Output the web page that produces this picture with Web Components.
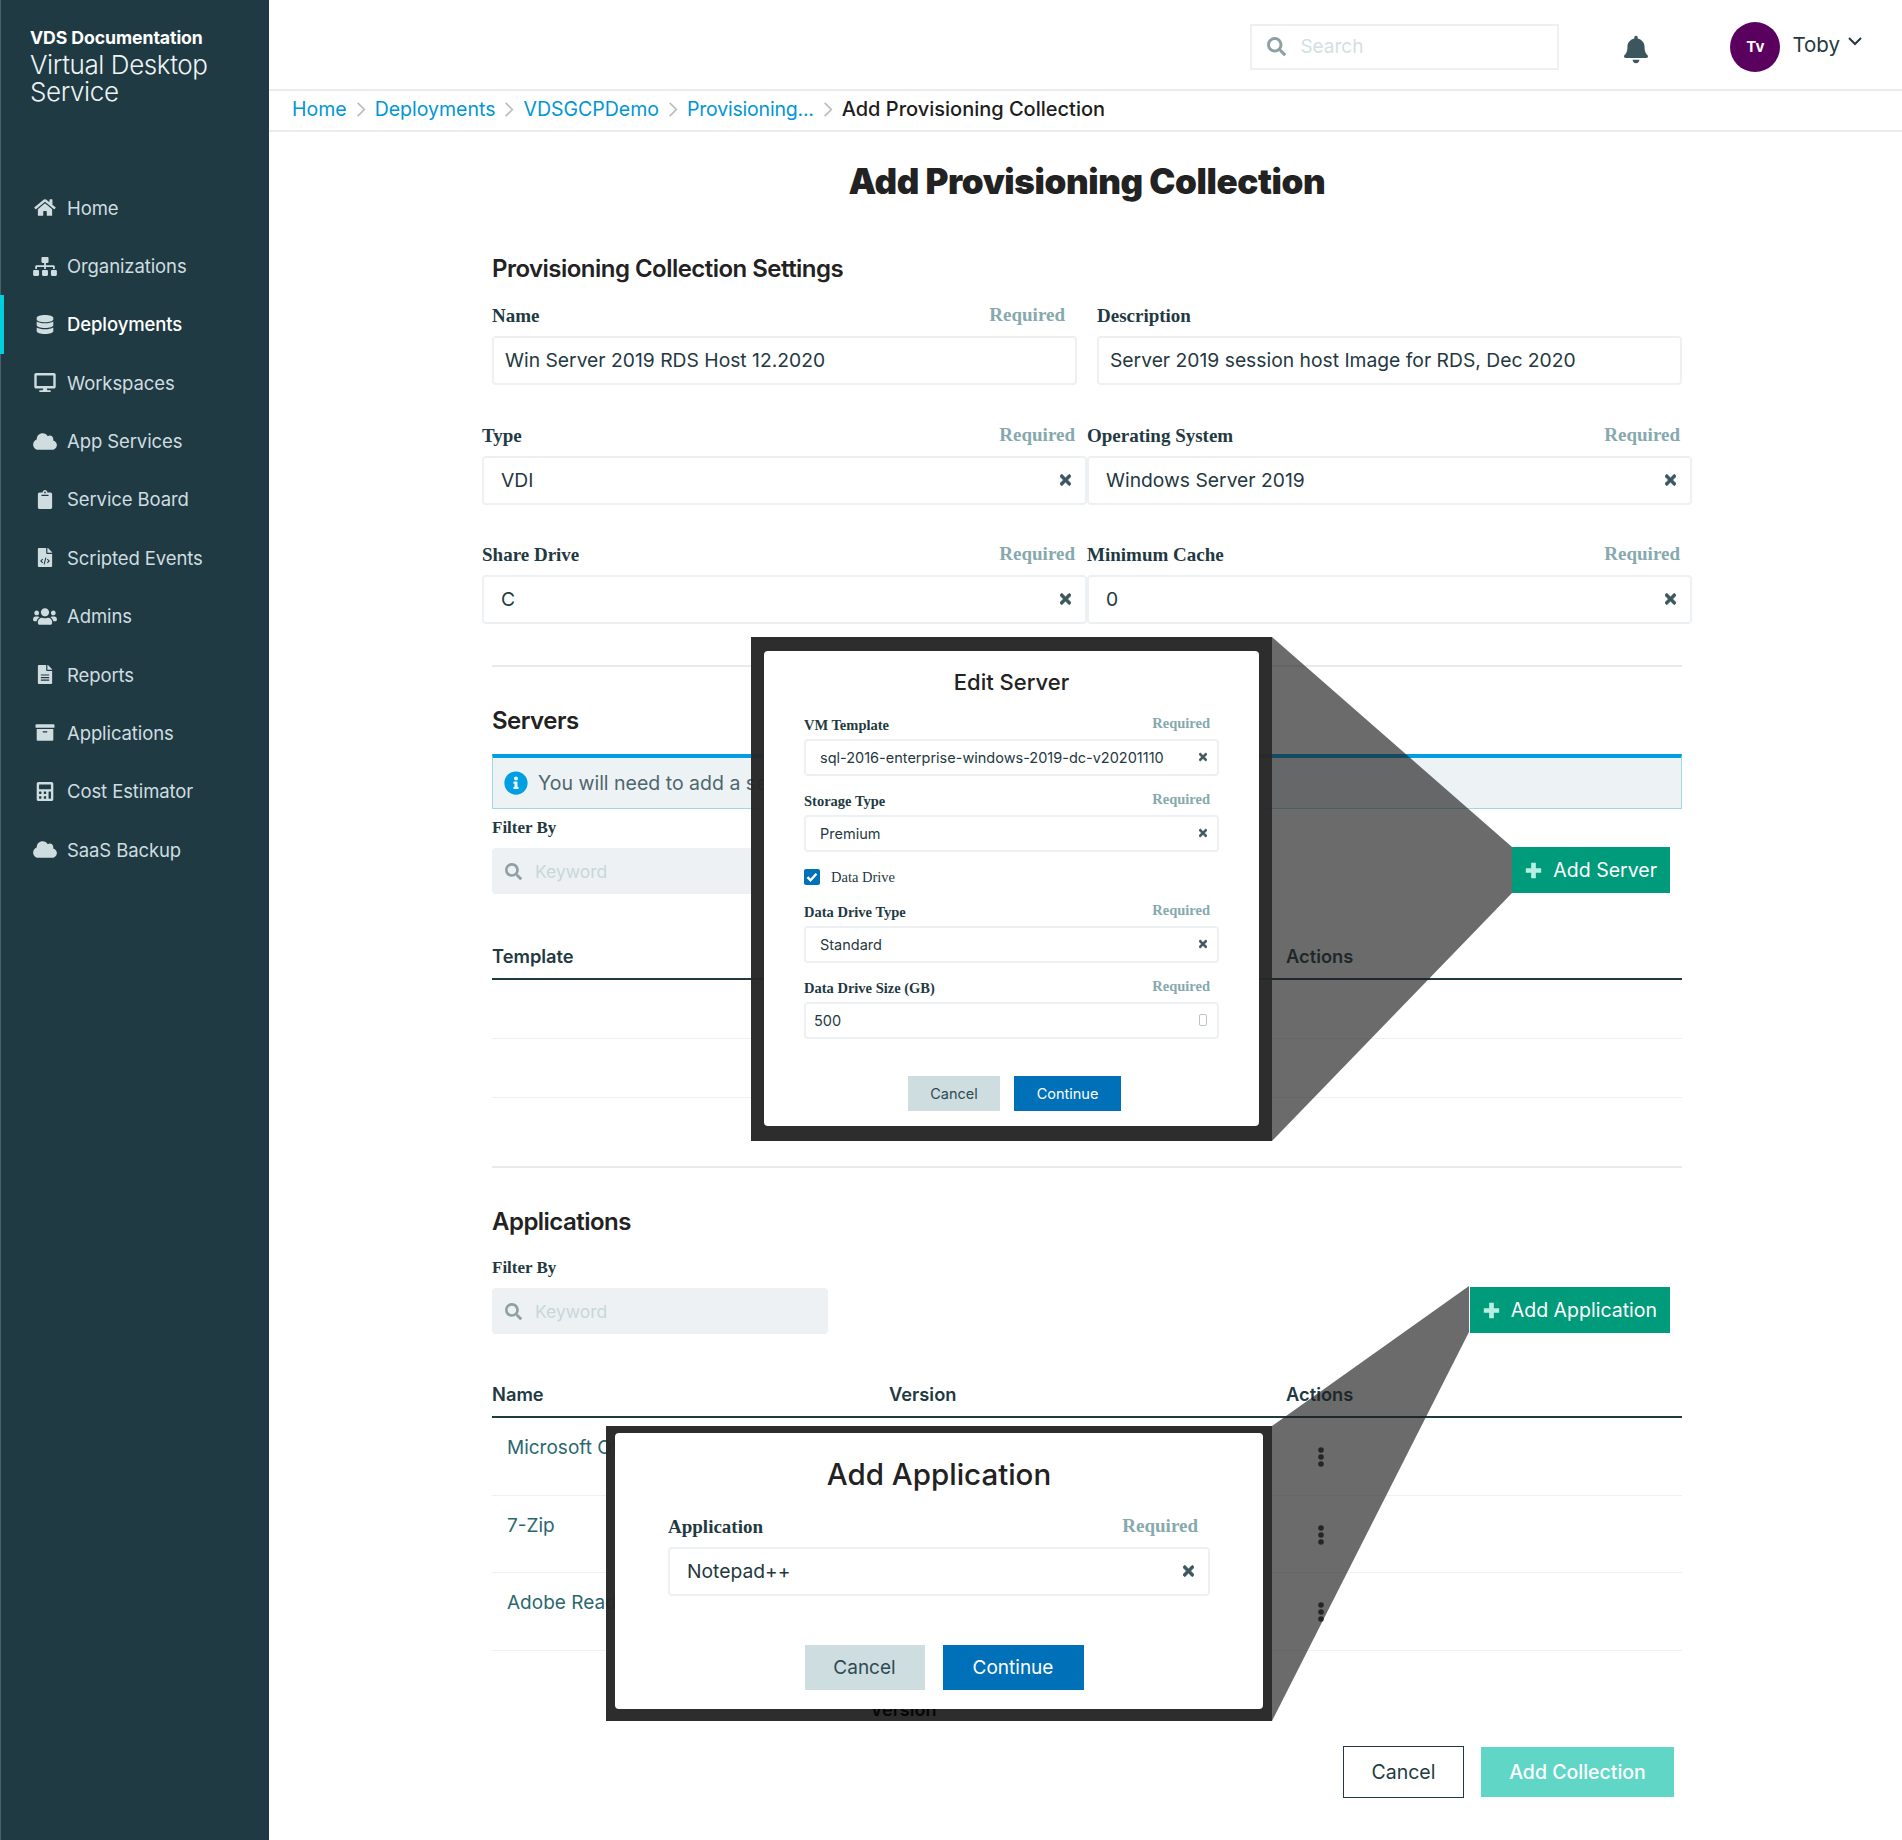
<!DOCTYPE html>
<html lang="en">
<head>
<meta charset="utf-8">
<title>Add Provisioning Collection</title>
<style>
    html, body { margin: 0; padding: 0; background: #fff; }
    body { font-family: Inter, "Open Sans", sans-serif; color: #1f3a42; width: 1902px; min-height: 1840px; }
</style>
</head>
<body>
<vds-app>
    <vds-sidebar slot="side">
        <nav-item icon="home">Home</nav-item>
        <nav-item icon="sitemap">Organizations</nav-item>
        <nav-item icon="database" active>Deployments</nav-item>
        <nav-item icon="desktop">Workspaces</nav-item>
        <nav-item icon="cloud">App Services</nav-item>
        <nav-item icon="clipboard">Service Board</nav-item>
        <nav-item icon="filecode">Scripted Events</nav-item>
        <nav-item icon="users">Admins</nav-item>
        <nav-item icon="filealt">Reports</nav-item>
        <nav-item icon="archive">Applications</nav-item>
        <nav-item icon="calculator">Cost Estimator</nav-item>
        <nav-item icon="cloud">SaaS Backup</nav-item>
    </vds-sidebar>

    <vds-topbar></vds-topbar>
    <vds-breadcrumb trail="Home|Deployments|VDSGCPDemo|Provisioning..." current="Add Provisioning Collection"></vds-breadcrumb>

    <vds-page>
        <page-title>Add Provisioning Collection</page-title>

        <section-head top="48">Provisioning Collection Settings</section-head>
        <form-row top="17">
            <form-field label="Name" required value="Win Server 2019 RDS Host 12.2020"></form-field>
            <form-field label="Description" value="Server 2019 session host Image for RDS, Dec 2020"></form-field>
        </form-row>
        <form-row wide top="39">
            <form-field label="Type" required value="VDI" clear></form-field>
            <form-field label="Operating System" required value="Windows Server 2019" clear></form-field>
        </form-row>
        <form-row wide top="38">
            <form-field label="Share Drive" required value="C" clear></form-field>
            <form-field label="Minimum Cache" required value="0" clear></form-field>
        </form-row>

        <section-rule top="41"></section-rule>
        <section-head top="36">Servers</section-head>
        <info-alert>You will need to add a server</info-alert>
        <filter-bar action="Add Server" top="8"></filter-bar>
        <data-table top="35" columns="Template||Actions"></data-table>
        <table-row height="58"></table-row>
        <table-row height="58"></table-row>

        <section-rule top="68"></section-rule>
        <section-head top="36">Applications</section-head>
        <filter-bar action="Add Application" top="17"></filter-bar>
        <data-table top="33" columns="Name|Version|Actions"></data-table>
        <table-row height="76.5" name="Microsoft Office" dots></table-row>
        <table-row height="76.5" name="7-Zip" dots></table-row>
        <table-row height="76.5" name="Adobe Reader" dots></table-row>

        <form-actions></form-actions>
    </vds-page>

    <!-- the two callouts that sit over the page -->
    <call-out slot="over" box="751,637,521,504" pad="14px 13px 15px 13px" points="1272,637 1512,847 1512,893 1272,1141">
        <edit-dialog heading="Edit Server" small confirm="Continue">
            <form-field small label="VM Template" required value="sql-2016-enterprise-windows-2019-dc-v20201110" clear></form-field>
            <form-field small label="Storage Type" required value="Premium" clear></form-field>
            <check-line>Data Drive</check-line>
            <form-field small label="Data Drive Type" required value="Standard" clear></form-field>
            <form-field small number label="Data Drive Size (GB)" required value="500"></form-field>
        </edit-dialog>
    </call-out>
    <call-out slot="over" box="606,1426,666,295" pad="7px 9px 12px 9px" points="1272,1426 1469,1286 1469,1332 1272,1721" ghost="Version">
        <edit-dialog heading="Add Application" confirm="Continue">
            <form-field label="Application" required value="Notepad++" clear></form-field>
        </edit-dialog>
    </call-out>
</vds-app>

<script>
const ICONS = {
    home: ['0 0 576 512', '<path d="M280.37 148.26L96 300.11V464a16 16 0 0 0 16 16l112.06-.29a16 16 0 0 0 15.92-16V368a16 16 0 0 1 16-16h64a16 16 0 0 1 16 16v95.64a16 16 0 0 0 16 16.05L464 480a16 16 0 0 0 16-16V300L295.67 148.26a12.19 12.19 0 0 0-15.3 0zM571.6 251.47L488 182.56V44.05a12 12 0 0 0-12-12h-56a12 12 0 0 0-12 12v72.61L318.47 43a48 48 0 0 0-61 0L4.34 251.47a12 12 0 0 0-1.6 16.9l25.5 31A12 12 0 0 0 45.15 301l235.22-193.74a12.19 12.19 0 0 1 15.3 0L530.9 301a12 12 0 0 0 16.9-1.6l25.5-31a12 12 0 0 0-1.7-16.93z"/>'],
    sitemap: ['0 0 640 512', '<path d="M128 352H32c-17.67 0-32 14.33-32 32v96c0 17.67 14.33 32 32 32h96c17.67 0 32-14.33 32-32v-96c0-17.67-14.33-32-32-32zm-24-80h192v48h48v-48h192v48h48v-57.59c0-21.17-17.23-38.41-38.41-38.41H344v-64h40c17.67 0 32-14.33 32-32V32c0-17.67-14.33-32-32-32H256c-17.67 0-32 14.33-32 32v96c0 17.67 14.33 32 32 32h40v64H94.41C73.23 224 56 241.23 56 262.41V320h48v-48zm264 80h-96c-17.67 0-32 14.33-32 32v96c0 17.67 14.33 32 32 32h96c17.67 0 32-14.33 32-32v-96c0-17.67-14.33-32-32-32zm240 0h-96c-17.67 0-32 14.33-32 32v96c0 17.67 14.33 32 32 32h96c17.67 0 32-14.33 32-32v-96c0-17.67-14.33-32-32-32z"/>'],
    database: ['0 0 448 512', '<path d="M448 73.143v45.714C448 159.143 347.667 192 224 192S0 159.143 0 118.857V73.143C0 32.857 100.333 0 224 0s224 32.857 224 73.143zM448 176v102.857C448 319.143 347.667 352 224 352S0 319.143 0 278.857V176c48.125 33.143 136.208 48.572 224 48.572S399.874 209.143 448 176zm0 160v102.857C448 479.143 347.667 512 224 512S0 479.143 0 438.857V336c48.125 33.143 136.208 48.572 224 48.572S399.874 369.143 448 336z"/>'],
    desktop: ['0 0 576 512', '<path d="M528 0H48C21.5 0 0 21.5 0 48v320c0 26.5 21.5 48 48 48h192l-16 48h-72c-13.3 0-24 10.7-24 24s10.7 24 24 24h272c13.3 0 24-10.7 24-24s-10.7-24-24-24h-72l-16-48h192c26.5 0 48-21.5 48-48V48c0-26.5-21.5-48-48-48zm-16 352H64V64h448v288z"/>'],
    cloud: ['0 0 640 512', '<path d="M537.6 226.6c4.1-10.7 6.4-22.4 6.4-34.6 0-53-43-96-96-96-19.7 0-38.1 6-53.3 16.2C367 64.2 315.3 32 256 32c-88.4 0-160 71.6-160 160 0 2.7.1 5.4.2 8.1C40.2 219.8 0 273.2 0 336c0 79.5 64.5 144 144 144h368c70.7 0 128-57.3 128-128 0-61.9-44-113.6-102.4-125.4z"/>'],
    clipboard: ['0 0 384 512', '<path d="M384 112v352c0 26.51-21.49 48-48 48H48c-26.51 0-48-21.49-48-48V112c0-26.51 21.49-48 48-48h80c0-35.29 28.71-64 64-64s64 28.71 64 64h80c26.51 0 48 21.49 48 48zM192 40c-13.255 0-24 10.745-24 24s10.745 24 24 24 24-10.745 24-24-10.745-24-24-24m96 114v-20a6 6 0 0 0-6-6H102a6 6 0 0 0-6 6v20a6 6 0 0 0 6 6h180a6 6 0 0 0 6-6z"/>'],
    filecode: ['0 0 384 512', '<path d="M224 136V0H24C10.7 0 0 10.7 0 24v464c0 13.3 10.7 24 24 24h336c13.3 0 24-10.7 24-24V160H248c-13.2 0-24-10.8-24-24zm160-14.1v6.1H256V0h6.1c6.4 0 12.5 2.5 17 7l97.9 98c4.5 4.5 7 10.6 7 16.9z"/><path d="M130 300l-50 50 50 50M254 300l50 50-50 50M215 260l-46 180" fill="none" stroke="#1f3a42" stroke-width="28"/>'],
    filealt: ['0 0 384 512', '<path d="M224 136V0H24C10.7 0 0 10.7 0 24v464c0 13.3 10.7 24 24 24h336c13.3 0 24-10.7 24-24V160H248c-13.2 0-24-10.8-24-24zm160-14.1v6.1H256V0h6.1c6.4 0 12.5 2.5 17 7l97.9 98c4.5 4.5 7 10.6 7 16.9z"/><path d="M80 270h224M80 340h224M80 410h224" fill="none" stroke="#1f3a42" stroke-width="32"/>'],
    users: ['0 0 640 512', '<path d="M96 224c35.3 0 64-28.7 64-64s-28.7-64-64-64-64 28.7-64 64 28.7 64 64 64zm448 0c35.3 0 64-28.7 64-64s-28.7-64-64-64-64 28.7-64 64 28.7 64 64 64zm32 32h-64c-17.6 0-33.5 7.1-45.1 18.6 40.3 22.1 68.9 62 75.1 109.4h66c17.7 0 32-14.3 32-32v-32c0-35.3-28.7-64-64-64zm-256 0c61.9 0 112-50.1 112-112S381.9 32 320 32 208 82.1 208 144s50.1 112 112 112zm76.8 32h-8.3c-20.8 10-43.9 16-68.5 16s-47.6-6-68.5-16h-8.3C179.6 288 128 339.6 128 403.2V432c0 26.5 21.5 48 48 48h288c26.5 0 48-21.5 48-48v-28.8c0-63.6-51.6-115.2-115.2-115.2zm-223.7-13.4C161.5 263.1 145.6 256 128 256H64c-35.3 0-64 28.7-64 64v32c0 17.7 14.3 32 32 32h65.9c6.3-47.4 34.9-87.3 75.2-109.4z"/>'],
    archive: ['0 0 512 512', '<path d="M32 448c0 17.7 14.3 32 32 32h384c17.7 0 32-14.3 32-32V160H32v288zm160-212c0-6.6 5.4-12 12-12h104c6.6 0 12 5.4 12 12v8c0 6.6-5.4 12-12 12H204c-6.6 0-12-5.4-12-12v-8zM480 32H32C14.3 32 0 46.3 0 64v48c0 8.8 7.2 16 16 16h480c8.8 0 16-7.2 16-16V64c0-17.7-14.3-32-32-32z"/>'],
    calculator: ['0 0 448 512', '<path d="M400 0H48C22.4 0 0 22.4 0 48v416c0 25.6 22.4 48 48 48h352c25.6 0 48-22.4 48-48V48c0-25.6-22.4-48-48-48zM128 435.2c0 6.4-6.4 12.8-12.8 12.8H76.8c-6.4 0-12.8-6.4-12.8-12.8v-38.4c0-6.4 6.4-12.8 12.8-12.8h38.4c6.4 0 12.8 6.4 12.8 12.8v38.4zm0-128c0 6.4-6.4 12.8-12.8 12.8H76.8c-6.4 0-12.8-6.4-12.8-12.8v-38.4c0-6.4 6.4-12.8 12.8-12.8h38.4c6.4 0 12.8 6.4 12.8 12.8v38.4zm128 128c0 6.4-6.4 12.8-12.8 12.8h-38.4c-6.4 0-12.8-6.4-12.8-12.8v-38.4c0-6.4 6.4-12.8 12.8-12.8h38.4c6.4 0 12.8 6.4 12.8 12.8v38.4zm0-128c0 6.4-6.4 12.8-12.8 12.8h-38.4c-6.4 0-12.8-6.4-12.8-12.8v-38.4c0-6.4 6.4-12.8 12.8-12.8h38.4c6.4 0 12.8 6.4 12.8 12.8v38.4zm128 128c0 6.4-6.4 12.8-12.8 12.8h-38.4c-6.4 0-12.8-6.4-12.8-12.8V268.8c0-6.4 6.4-12.8 12.8-12.8h38.4c6.4 0 12.8 6.4 12.8 12.8v166.4zm0-256c0 6.4-6.4 12.8-12.8 12.8H76.8c-6.4 0-12.8-6.4-12.8-12.8V76.8C64 70.4 70.4 64 76.8 64h294.4c6.4 0 12.8 6.4 12.8 12.8v102.4z"/>'],
    bell: ['0 0 448 512', '<path d="M224 512c35.32 0 63.97-28.65 63.97-64H160.03c0 35.35 28.65 64 63.97 64zm215.39-149.71c-19.32-20.76-55.47-51.99-55.47-154.29 0-77.7-54.48-139.9-127.94-155.16V32c0-17.67-14.32-32-31.98-32s-31.98 14.33-31.98 32v20.84C118.56 68.1 64.08 130.3 64.08 208c0 102.3-36.15 133.53-55.47 154.29-6 6.45-8.66 14.16-8.61 21.71.11 16.4 12.98 32 32.1 32h383.8c19.12 0 32-15.6 32.1-32 .05-7.55-2.61-15.27-8.61-21.71z"/>'],
    search: ['0 0 512 512', '<path d="M505 442.7L405.3 343c-4.5-4.5-10.6-7-17-7H372c27.6-35.3 44-79.7 44-128C416 93.1 322.9 0 208 0S0 93.1 0 208s93.1 208 208 208c48.3 0 92.7-16.4 128-44v16.3c0 6.4 2.5 12.5 7 17l99.7 99.7c9.4 9.4 24.6 9.4 33.9 0l28.3-28.3c9.4-9.4 9.4-24.6.1-34zM208 336c-70.7 0-128-57.2-128-128 0-70.7 57.2-128 128-128 70.7 0 128 57.2 128 128 0 70.7-57.2 128-128 128z"/>'],
    times: ['0 0 352 512', '<path stroke="currentColor" stroke-width="24" d="M242.72 256l100.07-100.07c12.28-12.28 12.28-32.19 0-44.48l-22.24-22.24c-12.28-12.28-32.19-12.28-44.48 0L176 189.28 75.93 89.21c-12.28-12.28-32.19-12.28-44.48 0L9.21 111.45c-12.28 12.28-12.28 32.19 0 44.48L109.28 256 9.21 356.07c-12.28 12.28-12.28 32.19 0 44.48l22.24 22.24c12.28 12.28 32.2 12.28 44.48 0L176 322.72l100.07 100.07c12.28 12.28 32.2 12.28 44.48 0l22.24-22.24c12.28-12.28 12.28-32.19 0-44.48L242.72 256z"/>'],
    info: ['0 0 512 512', '<path d="M256 8C119.043 8 8 119.083 8 256c0 136.997 111.043 248 248 248s248-111.003 248-248C504 119.083 392.957 8 256 8zm0 110c23.196 0 42 18.804 42 42s-18.804 42-42 42-42-18.804-42-42 18.804-42 42-42zm56 254c0 6.627-5.373 12-12 12h-88c-6.627 0-12-5.373-12-12v-24c0-6.627 5.373-12 12-12h12v-64h-12c-6.627 0-12-5.373-12-12v-24c0-6.627 5.373-12 12-12h64c6.627 0 12 5.373 12 12v100h12c6.627 0 12 5.373 12 12v24z"/>'],
    plus: ['0 0 20 20', '<path d="M10 1v18M1 10h18" fill="none" stroke="currentColor" stroke-width="5.5"/>'],
    chevron: ['0 0 12 20', '<path d="M2 2l8 8-8 8" fill="none" stroke="currentColor" stroke-width="2"/>'],
    down: ['0 0 16 10', '<path d="M2 2l6 6 6-6" fill="none" stroke="currentColor" stroke-width="2"/>'],
    dots: ['0 0 6 20', '<circle cx="3" cy="3" r="2.8"/><circle cx="3" cy="10" r="2.8"/><circle cx="3" cy="17" r="2.8"/>'],
};

class VdsIcon extends HTMLElement {
    constructor() {
        super();
        this.attachShadow({ mode: 'open' });
    }

    connectedCallback() {
        const [box, body] = ICONS[this.getAttribute('name')];
        this.shadowRoot.innerHTML = /*html*/`
        <style>
            :host { display: inline-flex; flex: none; }
            svg { width: 100%; height: 100%; fill: currentColor; display: block; }
        </style>
        <svg viewBox="${box}" aria-hidden="true">${body}</svg>
        `;
    }
}

class VdsApp extends HTMLElement {
    constructor() {
        super();
        this.attachShadow({ mode: 'open' });
    }

    connectedCallback() {
        this.shadowRoot.innerHTML = /*html*/`
        <style>
            :host { display: block; position: relative; width: 1902px; min-height: 1840px; }
            .frame { display: grid; grid-template-columns: 269px 1fr; min-height: 1840px; }
            main { min-width: 0; }
        </style>
        <div class="frame">
            <slot name="side"></slot>
            <main><slot></slot></main>
        </div>
        <slot name="over"></slot>
        `;
    }
}

class VdsSidebar extends HTMLElement {
    constructor() {
        super();
        this.attachShadow({ mode: 'open' });
    }

    connectedCallback() {
        this.shadowRoot.innerHTML = /*html*/`
        <style>
            :host {
                display: block;
                background: #1f3a42;
                border-left: 1px solid #47606a;
                box-sizing: border-box;
                color: #cfdde0;
            }
            .brand { padding: 27px 0 0 29px; height: 152px; box-sizing: border-box; color: #eef4f5; }
            .org { font-size: 17.7px; font-weight: 700; line-height: 22px; color: #fff; letter-spacing: -.1px; }
            .product { font-size: 26px; font-weight: 300; line-height: 27px; margin-top: 2px; letter-spacing: -.4px; width: 215px; }
            nav { display: block; padding-top: 26.5px; }
        </style>
        <div class="brand">
            <div class="org">VDS Documentation</div>
            <div class="product">Virtual Desktop Service</div>
        </div>
        <nav><slot></slot></nav>
        `;
    }
}

class NavItem extends HTMLElement {
    constructor() {
        super();
        this.attachShadow({ mode: 'open' });
    }

    connectedCallback() {
        const icon = this.getAttribute('icon');
        this.shadowRoot.innerHTML = /*html*/`
        <style>
            :host {
                display: flex;
                align-items: center;
                gap: 10px;
                height: 58.36px;
                margin-left: -1px;
                font-size: 18.5px;
                box-sizing: border-box;
                border-left: 4px solid transparent;
                padding-left: 29px;
                letter-spacing: -.1px;
            }
            :host([active]) { border-left-color: #00d0de; color: #fff; font-weight: 500; }
            .slot { width: 24px; height: 19px; display: flex; justify-content: center; color: #cfdde0; }
            vds-icon { height: 19px; width: 24px; }
        </style>
        <span class="slot"><vds-icon name="${icon}"></vds-icon></span>
        <slot></slot>
        `;
    }
}

class VdsTopbar extends HTMLElement {
    constructor() {
        super();
        this.attachShadow({ mode: 'open' });
    }

    connectedCallback() {
        this.shadowRoot.innerHTML = /*html*/`
        <style>
            :host {
                display: flex;
                align-items: center;
                justify-content: flex-end;
                height: 91px;
                box-sizing: border-box;
                padding: 4px 39px 0 0;
                border-bottom: 2px solid #e9eced;
            }
            .search {
                display: flex;
                align-items: center;
                width: 309px;
                height: 46px;
                box-sizing: border-box;
                border: 2px solid #edf1f3;
                padding-left: 15px;
                gap: 14px;
                color: #d3dfe2;
                font-size: 19px;
            }
            .search vds-icon { width: 19px; height: 19px; color: #8fa0a5; }
            .bell { width: 24px; height: 29px; color: #3d555c; margin: 6px 0 0 65px; }
            .avatar {
                width: 50px;
                height: 50px;
                border-radius: 50%;
                background: #5a005e;
                color: #fff;
                font-size: 15px;
                font-weight: 700;
                display: flex;
                align-items: center;
                justify-content: center;
                margin-left: 82px;
            }
            .name { font-size: 20.5px; margin: -4px 0 0 12px; color: #24393f; }
            .down { width: 16px; height: 10px; margin: -12px 0 0 7px; color: #24393f; }
        </style>
        <div class="search"><vds-icon name="search"></vds-icon><span>Search</span></div>
        <vds-icon class="bell" name="bell"></vds-icon>
        <div class="avatar">Tv</div>
        <span class="name">Toby</span>
        <vds-icon class="down" name="down"></vds-icon>
        `;
    }
}

class VdsBreadcrumb extends HTMLElement {
    constructor() {
        super();
        this.attachShadow({ mode: 'open' });
    }

    connectedCallback() {
        const links = this.getAttribute('trail').split('|').map(t => `<a>${t}</a><vds-icon name="chevron"></vds-icon>`).join('');
        this.shadowRoot.innerHTML = /*html*/`
        <style>
            :host {
                display: flex;
                align-items: center;
                gap: 9px;
                height: 41px;
                box-sizing: border-box;
                padding: 0 0 3px 23px;
                border-bottom: 2px solid #e9eced;
                font-size: 19.5px;
            }
            a { color: #0096d6; }
            a:nth-of-type(4) { letter-spacing: -.2px; }
            b { font-weight: 500; color: #1d1d1d; font-size: 20px; }
            vds-icon { width: 10px; height: 17px; color: #b9bdbe; }
        </style>
        ${links}<b>${this.getAttribute('current')}</b>
        `;
    }
}

class VdsPage extends HTMLElement {
    constructor() {
        super();
        this.attachShadow({ mode: 'open' });
    }

    connectedCallback() {
        this.shadowRoot.innerHTML = /*html*/`
        <style>
            :host { display: block; width: 1190px; margin-left: 223px; }
        </style>
        <slot></slot>
        `;
    }
}

class PageTitle extends HTMLElement {
    constructor() {
        super();
        this.attachShadow({ mode: 'open' });
    }

    connectedCallback() {
        this.shadowRoot.innerHTML = /*html*/`
        <style>
            :host {
                display: block;
                margin-top: 27px;
                font-size: 35px;
                line-height: 44px;
                font-weight: 900;
                text-align: center;
                color: #222;
                letter-spacing: -.4px;
            }
        </style>
        <slot></slot>
        `;
    }
}

class SectionHead extends HTMLElement {
    constructor() {
        super();
        this.attachShadow({ mode: 'open' });
    }

    connectedCallback() {
        this.shadowRoot.innerHTML = /*html*/`
        <style>
            :host {
                display: block;
                margin-top: ${this.getAttribute('top')}px;
                font-size: 24px;
                line-height: 36px;
                font-weight: 600;
                color: #222;
                letter-spacing: -.53px;
            }
        </style>
        <slot></slot>
        `;
    }
}

class SectionRule extends HTMLElement {
    constructor() {
        super();
        this.attachShadow({ mode: 'open' });
    }

    connectedCallback() {
        this.shadowRoot.innerHTML = /*html*/`
        <style>
            :host { display: block; height: 2px; background: #e8eaeb; margin-top: ${this.getAttribute('top')}px; }
        </style>
        `;
    }
}

class FormRow extends HTMLElement {
    constructor() {
        super();
        this.attachShadow({ mode: 'open' });
    }

    connectedCallback() {
        const top = this.getAttribute('top');
        this.shadowRoot.innerHTML = /*html*/`
        <style>
            :host { display: grid; grid-template-columns: 585px 585px; gap: 20px; margin-top: ${top}px; }
            :host([wide]) { grid-template-columns: 605px 605px; gap: 0; margin: ${top}px -10px 0; }
        </style>
        <slot></slot>
        `;
    }
}

class FormField extends HTMLElement {
    constructor() {
        super();
        this.attachShadow({ mode: 'open' });
    }

    connectedCallback() {
        const required = this.hasAttribute('required') ? '<span class="req">Required</span>' : '';
        const clear = this.hasAttribute('clear') ? '<vds-icon class="x" name="times"></vds-icon>' : '';
        const spin = this.hasAttribute('number') ? '<span class="spin"></span>' : '';
        this.shadowRoot.innerHTML = /*html*/`
        <style>
            :host { display: block; }
            .head {
                display: flex;
                justify-content: space-between;
                align-items: center;
                height: 32px;
                padding-bottom: 8px;
                box-sizing: border-box;
                font-family: "Liberation Serif", serif;
                font-weight: 700;
                font-size: 19px;
                color: #1f3a42;
            }
            .req { color: #86a9ae; margin-right: 12px; margin-top: -2px; }
            .box {
                display: flex;
                align-items: center;
                justify-content: space-between;
                height: 49px;
                box-sizing: border-box;
                border: 2px solid #edf1f3;
                border-radius: 4px;
                padding: 0 14px 2px 11px;
                font-size: 19.3px;
                color: #24393f;
            }
            .x { width: 11px; height: 16px; color: #3d555c; }
            :host([clear]) .box { padding-left: 17px; }

            :host([small]) .head { height: 23px; padding-bottom: 5px; font-size: 14.5px; }
            :host([small]) .req { margin-right: 9px; margin-top: -4px; }
            :host([small]) .box { height: 37px; font-size: 14.5px; padding: 0 10px 1px 14px; }
            :host([small]) .x { width: 8px; height: 12px; }
            :host([small][number]) .box { padding-left: 8px; }
            :host([small]) { margin-bottom: 16px; }
            .spin { width: 6px; height: 10px; border: 1px solid #b9c4c8; border-radius: 2px; }
        </style>
        <div class="head"><span>${this.getAttribute('label')}</span>${required}</div>
        <div class="box"><span>${this.getAttribute('value')}</span>${clear}${spin}</div>
        `;
    }
}

class CheckLine extends HTMLElement {
    constructor() {
        super();
        this.attachShadow({ mode: 'open' });
    }

    connectedCallback() {
        this.shadowRoot.innerHTML = /*html*/`
        <style>
            :host {
                display: flex;
                align-items: center;
                gap: 11px;
                height: 20px;
                margin: -1px 0 16px;
                font-family: "Liberation Serif", serif;
                font-size: 14.5px;
                color: #24393f;
            }
            svg { width: 16px; height: 16px; }
        </style>
        <svg viewBox="0 0 16 16"><rect width="16" height="16" rx="2" fill="#0070b8"/><path d="M3.5 8.2l3 3 6-6.4" fill="none" stroke="#fff" stroke-width="2.4"/></svg>
        <slot></slot>
        `;
    }
}

class InfoAlert extends HTMLElement {
    constructor() {
        super();
        this.attachShadow({ mode: 'open' });
    }

    connectedCallback() {
        this.shadowRoot.innerHTML = /*html*/`
        <style>
            :host {
                display: flex;
                align-items: center;
                gap: 10px;
                height: 55px;
                box-sizing: border-box;
                margin-top: 15px;
                padding-left: 11px;
                background: #edf2f5;
                border: 1px solid #9fd9de;
                border-top: 4px solid #009fe3;
                font-size: 19.5px;
                color: #4f666d;
            }
            vds-icon { width: 24px; height: 24px; color: #009fe3; }
        </style>
        <vds-icon name="info"></vds-icon>
        <slot></slot>
        `;
    }
}

class FilterBar extends HTMLElement {
    constructor() {
        super();
        this.attachShadow({ mode: 'open' });
    }

    connectedCallback() {
        this.shadowRoot.innerHTML = /*html*/`
        <style>
            :host { display: block; margin-top: ${this.getAttribute('top')}px; }
            .label {
                font-family: "Liberation Serif", serif;
                font-weight: 700;
                font-size: 17px;
                line-height: 22px;
                color: #1f3a42;
            }
            .row { display: flex; justify-content: space-between; margin-top: 9px; padding-right: 12px; }
            .keyword {
                display: flex;
                align-items: center;
                gap: 13px;
                width: 336px;
                height: 46px;
                box-sizing: border-box;
                padding-left: 13px;
                background: #edf1f3;
                border-radius: 4px;
                color: #c9d7db;
                font-size: 17.5px;
            }
            .keyword vds-icon { width: 17px; height: 17px; color: #8fa0a5; }
            .add {
                display: flex;
                align-items: center;
                gap: 11px;
                height: 46px;
                margin-top: -1px;
                padding: 0 13px;
                background: #009b7a;
                color: #fff;
                font-size: 19.5px;
            }
            .add vds-icon { width: 17px; height: 17px; color: #b6f0e4; }
        </style>
        <div class="label">Filter By</div>
        <div class="row">
            <div class="keyword"><vds-icon name="search"></vds-icon><span>Keyword</span></div>
            <div class="add"><vds-icon name="plus"></vds-icon><span>${this.getAttribute('action')}</span></div>
        </div>
        `;
    }
}

class DataTable extends HTMLElement {
    constructor() {
        super();
        this.attachShadow({ mode: 'open' });
    }

    connectedCallback() {
        const cols = this.getAttribute('columns').split('|').map(c => `<span>${c}</span>`).join('');
        this.shadowRoot.innerHTML = /*html*/`
        <style>
            :host {
                display: grid;
                grid-template-columns: 397px 397px 1fr;
                align-items: center;
                margin-top: ${this.getAttribute('top')}px;
                height: 51px;
                box-sizing: border-box;
                padding-top: 4px;
                border-bottom: 2px solid #1f3a42;
                font-size: 18.3px;
                font-weight: 600;
                color: #1f3a42;
            }
        </style>
        ${cols}
        `;
    }
}

class TableRow extends HTMLElement {
    constructor() {
        super();
        this.attachShadow({ mode: 'open' });
    }

    connectedCallback() {
        const dots = this.hasAttribute('dots') ? '<vds-icon name="dots"></vds-icon>' : '';
        this.shadowRoot.innerHTML = /*html*/`
        <style>
            :host {
                display: grid;
                grid-template-columns: 794px 1fr;
                height: ${Number(this.getAttribute('height')) + 1}px;
                box-sizing: border-box;
                border-bottom: 1px solid #eef0f1;
                font-size: 19px;
                color: #2b6770;
            }
            span { padding: 18px 0 0 15px; }
            vds-icon { width: 6px; height: 20px; color: #333; margin: 29px 0 0 32px; }
        </style>
        <span>${this.getAttribute('name') || ''}</span>
        ${dots}
        `;
    }
}

class FormActions extends HTMLElement {
    constructor() {
        super();
        this.attachShadow({ mode: 'open' });
    }

    connectedCallback() {
        this.shadowRoot.innerHTML = /*html*/`
        <style>
            :host {
                display: flex;
                justify-content: flex-end;
                align-items: center;
                gap: 17px;
                margin-top: 95px;
                padding-right: 8px;
                font-size: 19.5px;
            }
            div { display: flex; align-items: center; justify-content: center; box-sizing: border-box; }
            .cancel { width: 121px; height: 52px; border: 1px solid #1f3a42; color: #1f3a42; }
            .add { width: 193px; height: 50px; background: #5fd6c6; color: #fff; font-weight: 500; }
        </style>
        <div class="cancel">Cancel</div>
        <div class="add">Add Collection</div>
        `;
    }
}

// dark frame plus the grey wedge that points at the button it came from
class CallOut extends HTMLElement {
    constructor() {
        super();
        this.attachShadow({ mode: 'open' });
    }

    connectedCallback() {
        const [x, y, w, h] = this.getAttribute('box').split(',').map(Number);
        const ghost = this.getAttribute('ghost');
        this.shadowRoot.innerHTML = /*html*/`
        <style>
            :host { display: contents; }
            svg { position: absolute; left: 0; top: 0; width: 1902px; height: 1840px; pointer-events: none; }
            .frame {
                position: absolute;
                left: ${x}px;
                top: ${y}px;
                width: ${w}px;
                height: ${h}px;
                box-sizing: border-box;
                padding: ${this.getAttribute('pad')};
                background: rgba(38, 38, 38, .97);
                display: flex;
                overflow: hidden;
            }
            .ghost {
                position: absolute;
                left: 264px;
                bottom: 0;
                font-size: 18px;
                font-weight: 600;
                line-height: 22px;
                color: #060606;
            }
            ::slotted(*) { flex: 1; position: relative; }
        </style>
        <svg viewBox="0 0 1902 1840"><polygon points="${this.getAttribute('points')}" fill="rgba(30,30,30,.66)"/></svg>
        <div class="frame">
            ${ghost ? `<span class="ghost">${ghost}</span>` : ''}
            <slot></slot>
        </div>
        `;
    }
}

class EditDialog extends HTMLElement {
    constructor() {
        super();
        this.attachShadow({ mode: 'open' });
    }

    connectedCallback() {
        this.shadowRoot.innerHTML = /*html*/`
        <style>
            :host {
                display: block;
                background: #fff;
                border-radius: 4px;
                box-sizing: border-box;
                padding: 22px 53px 0;
            }
            h2 { margin: 0; text-align: center; font-size: 29.5px; line-height: 38px; font-weight: 500; color: #222; }
            .body { margin-top: 22px; }
            .buttons { display: flex; justify-content: center; gap: 18px; margin: 49px 0 0 10px; font-size: 19px; }
            .buttons div { display: flex; align-items: center; justify-content: center; height: 45px; }
            .cancel { width: 120px; background: #cddde0; color: #2f4a52; }
            .go { width: 141px; background: #0070b8; color: #fff; }

            :host([small]) { padding: 16px 40px 0 40px; }
            :host([small]) h2 { font-size: 22px; line-height: 30px; }
            :host([small]) .body { margin-top: 19px; }
            :host([small]) .buttons { justify-content: flex-end; gap: 14px; margin: 37px 98px 0 0; font-size: 14.5px; }
            :host([small]) .buttons div { height: 35px; }
            :host([small]) .cancel { width: 92px; }
            :host([small]) .go { width: 107px; }
        </style>
        <h2>${this.getAttribute('heading')}</h2>
        <div class="body"><slot></slot></div>
        <div class="buttons">
            <div class="cancel">Cancel</div>
            <div class="go">${this.getAttribute('confirm')}</div>
        </div>
        `;
    }
}

customElements.define('vds-icon', VdsIcon);
customElements.define('vds-app', VdsApp);
customElements.define('vds-sidebar', VdsSidebar);
customElements.define('nav-item', NavItem);
customElements.define('vds-topbar', VdsTopbar);
customElements.define('vds-breadcrumb', VdsBreadcrumb);
customElements.define('vds-page', VdsPage);
customElements.define('page-title', PageTitle);
customElements.define('section-head', SectionHead);
customElements.define('section-rule', SectionRule);
customElements.define('form-row', FormRow);
customElements.define('form-field', FormField);
customElements.define('check-line', CheckLine);
customElements.define('info-alert', InfoAlert);
customElements.define('filter-bar', FilterBar);
customElements.define('data-table', DataTable);
customElements.define('table-row', TableRow);
customElements.define('form-actions', FormActions);
customElements.define('call-out', CallOut);
customElements.define('edit-dialog', EditDialog);
</script>
</body>
</html>
